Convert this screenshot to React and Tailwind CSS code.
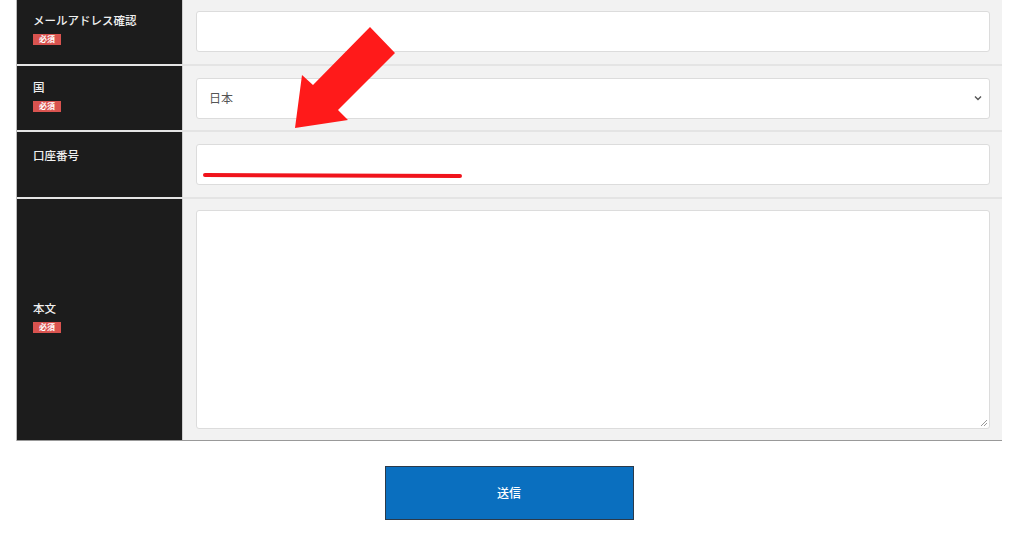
import React from "react";

const font = { fontFamily: '"Noto Sans CJK JP", "Noto Sans", sans-serif' };

function Badge({ hidden }) {
  return (
    <span
      className={`mt-[7px] inline-flex h-[11px] w-[28px] items-center justify-center bg-[#d9534f] text-[8px] font-bold leading-none text-white ${hidden ? "invisible" : ""}`}
    >
      必須
    </span>
  );
}

function Row({ label, required, h, children, first, hiddenBadge, lift }) {
  return (
    <div className={`flex ${first ? "" : "border-t-2 border-[#e4e4e4]"}`} style={{ height: h }}>
      <div
        className="flex w-[166px] shrink-0 flex-col items-start justify-center border-r border-[#cfcfcf] bg-[#1c1c1c] pl-[16px]"
        style={{ paddingBottom: lift }}
      >
        <span className="text-[11.5px] font-medium leading-[14px] text-[#f0f0f0]">{label}</span>
        {required ? <Badge /> : hiddenBadge ? <Badge hidden /> : null}
      </div>
      <div className="flex flex-1 items-center bg-[#f2f2f2] pl-[13px] pr-[12px]">{children}</div>
    </div>
  );
}

export default function App() {
  return (
    <div className="relative h-[538px] w-[1024px] overflow-hidden bg-white" style={font}>
      <div className="ml-[16px] mt-[-1px] w-[986px] border-l border-[#bbb]">
        <Row label="メールアドレス確認" required h={65} first lift={6}>
          <div className="h-[41px] w-full rounded-[3px] border border-[#dcdcdc] bg-white" />
        </Row>
        <Row label="国" required h={66} lift={5}>
          <div className="flex h-[41px] w-full items-center justify-between rounded-[3px] border border-[#dcdcdc] bg-white pl-[12px] pr-[6px]">
            <span className="text-[12px] text-[#555]">日本</span>
            <svg width="10" height="10" viewBox="0 0 10 10">
              <path d="M2 3.5 L5 6.5 L8 3.5" fill="none" stroke="#555" strokeWidth="1.4" />
            </svg>
          </div>
        </Row>
        <Row label="口座番号" h={67} hiddenBadge lift={2}>
          <div className="h-[41px] w-full rounded-[3px] border border-[#dcdcdc] bg-white" />
        </Row>
        <Row label="本文" required h={243} lift={6}>
          <div className="relative h-[219px] w-full rounded-[3px] border border-[#dcdcdc] bg-white">
            <svg className="absolute bottom-[1px] right-[1px]" width="9" height="9" viewBox="0 0 9 9">
              <path d="M8 2 L2 8 M8 5 L5 8" stroke="#999" strokeWidth="1" />
            </svg>
          </div>
        </Row>
        <div className="h-px bg-[#999]" />
      </div>

      <div className="flex w-[1018px] justify-center pt-[25px]">
        <button className="h-[54px] w-[249px] border border-[#2b3a4a] bg-[#0a6fbf] text-[12px] font-medium text-white">
          送信
        </button>
      </div>

      <svg className="pointer-events-none absolute left-0 top-0" width="1024" height="538">
        <polygon
          points="370,27 395,53 338,110 348,120 295,128 302,75 313,85"
          fill="#ff1a1a"
        />
        <line x1="205" y1="175" x2="460" y2="176" stroke="#f0141c" strokeWidth="4" strokeLinecap="round" />
      </svg>
    </div>
  );
}
